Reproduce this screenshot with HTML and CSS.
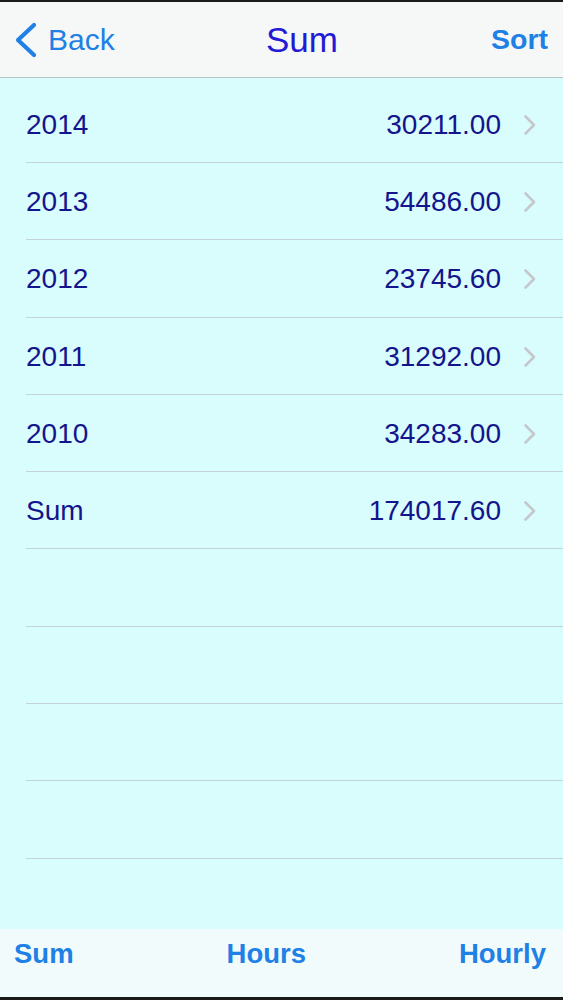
FILE: index.html
```html
<!DOCTYPE html>
<html>
<head>
<meta charset="utf-8">
<link rel="stylesheet" href="styles.css">
</head>
<body>
<div class="screen">
  <div class="topstrip"></div>
  <header class="navbar">
    <div class="nav-left">
      <svg class="back-chev" width="24" height="36" viewBox="0 0 24 36"><polyline points="20,3 4,18 20,33" fill="none" stroke="#1f80e6" stroke-width="4.2" stroke-linecap="round" stroke-linejoin="round"/></svg>
      <span class="back-text">Back</span>
    </div>
    <div class="nav-title">Sum</div>
    <div class="nav-right">Sort</div>
  </header>
  <main class="list">
    <div class="row"><span class="label">2014</span><span class="value">30211.00</span><svg class="chev" width="14" height="22" viewBox="0 0 14 22"><polyline points="2.5,2.5 11,11 2.5,19.5" fill="none" stroke="#c4c8cc" stroke-width="2.6" stroke-linecap="round" stroke-linejoin="round"/></svg></div>
    <div class="row"><span class="label">2013</span><span class="value">54486.00</span><svg class="chev" width="14" height="22" viewBox="0 0 14 22"><polyline points="2.5,2.5 11,11 2.5,19.5" fill="none" stroke="#c4c8cc" stroke-width="2.6" stroke-linecap="round" stroke-linejoin="round"/></svg></div>
    <div class="row"><span class="label">2012</span><span class="value">23745.60</span><svg class="chev" width="14" height="22" viewBox="0 0 14 22"><polyline points="2.5,2.5 11,11 2.5,19.5" fill="none" stroke="#c4c8cc" stroke-width="2.6" stroke-linecap="round" stroke-linejoin="round"/></svg></div>
    <div class="row"><span class="label">2011</span><span class="value">31292.00</span><svg class="chev" width="14" height="22" viewBox="0 0 14 22"><polyline points="2.5,2.5 11,11 2.5,19.5" fill="none" stroke="#c4c8cc" stroke-width="2.6" stroke-linecap="round" stroke-linejoin="round"/></svg></div>
    <div class="row"><span class="label">2010</span><span class="value">34283.00</span><svg class="chev" width="14" height="22" viewBox="0 0 14 22"><polyline points="2.5,2.5 11,11 2.5,19.5" fill="none" stroke="#c4c8cc" stroke-width="2.6" stroke-linecap="round" stroke-linejoin="round"/></svg></div>
    <div class="row"><span class="label">Sum</span><span class="value">174017.60</span><svg class="chev" width="14" height="22" viewBox="0 0 14 22"><polyline points="2.5,2.5 11,11 2.5,19.5" fill="none" stroke="#c4c8cc" stroke-width="2.6" stroke-linecap="round" stroke-linejoin="round"/></svg></div>
    <div class="row empty"></div>
    <div class="row empty"></div>
    <div class="row empty"></div>
    <div class="row empty"></div>
  </main>
  <footer class="toolbar">
    <span class="tool">Sum</span>
    <span class="tool">Hours</span>
    <span class="tool">Hourly</span>
  </footer>
  <div class="bottomstrip"></div>
</div>
</body>
</html>
```
FILE: styles.css
```css
html, body {
  margin: 0;
  padding: 0;
  background: #111;
}
.screen {
  width: 563px;
  height: 1000px;
  display: flex;
  flex-direction: column;
  font-family: "Liberation Sans", Arial, sans-serif;
  overflow: hidden;
}
.topstrip {
  height: 2px;
  background: #1a1a1a;
  flex: none;
}
.navbar {
  height: 75px;
  flex: none;
  background: #f6f8f8;
  border-bottom: 1px solid #b9c1c2;
  display: flex;
  align-items: center;
  justify-content: space-between;
  padding: 0 15px 0 14px;
}
.nav-left {
  display: flex;
  align-items: center;
  width: 130px;
}
.back-chev {
  display: block;
  margin-top: 1px;
}
.back-text {
  font-size: 30px;
  color: #1f80e6;
  margin-left: 10px;
  line-height: 1;
}
.nav-title {
  font-size: 35px;
  color: #2419d4;
  line-height: 1;
  margin-left: 42px;
}
.nav-right {
  width: 130px;
  text-align: right;
  font-size: 28.5px;
  font-weight: bold;
  color: #1f80e6;
  line-height: 1;
}
.list {
  flex: 1;
  background: #d9fcfd;
  padding-top: 7.7px;
}
.row {
  box-sizing: border-box;
  height: 77.3px;
  margin-left: 26px;
  padding-right: 26px;
  padding-top: 2px;
  border-bottom: 1px solid #c3d3d6;
  display: flex;
  align-items: center;
  color: #14148c;
  font-size: 28px;
}
.label {
  flex: 1;
  line-height: 1;
}
.value {
  line-height: 1;
}
.chev {
  display: block;
  margin-left: 22px;
}
.toolbar {
  box-sizing: border-box;
  height: 68px;
  flex: none;
  background: #f2fbfc;
  display: flex;
  align-items: center;
  justify-content: space-between;
  padding: 0 17px 18px 14px;
}
.tool {
  font-size: 27.5px;
  font-weight: bold;
  color: #1f80e6;
  line-height: 1;
}
.bottomstrip {
  height: 3px;
  background: #1a1a1a;
  flex: none;
}
```
